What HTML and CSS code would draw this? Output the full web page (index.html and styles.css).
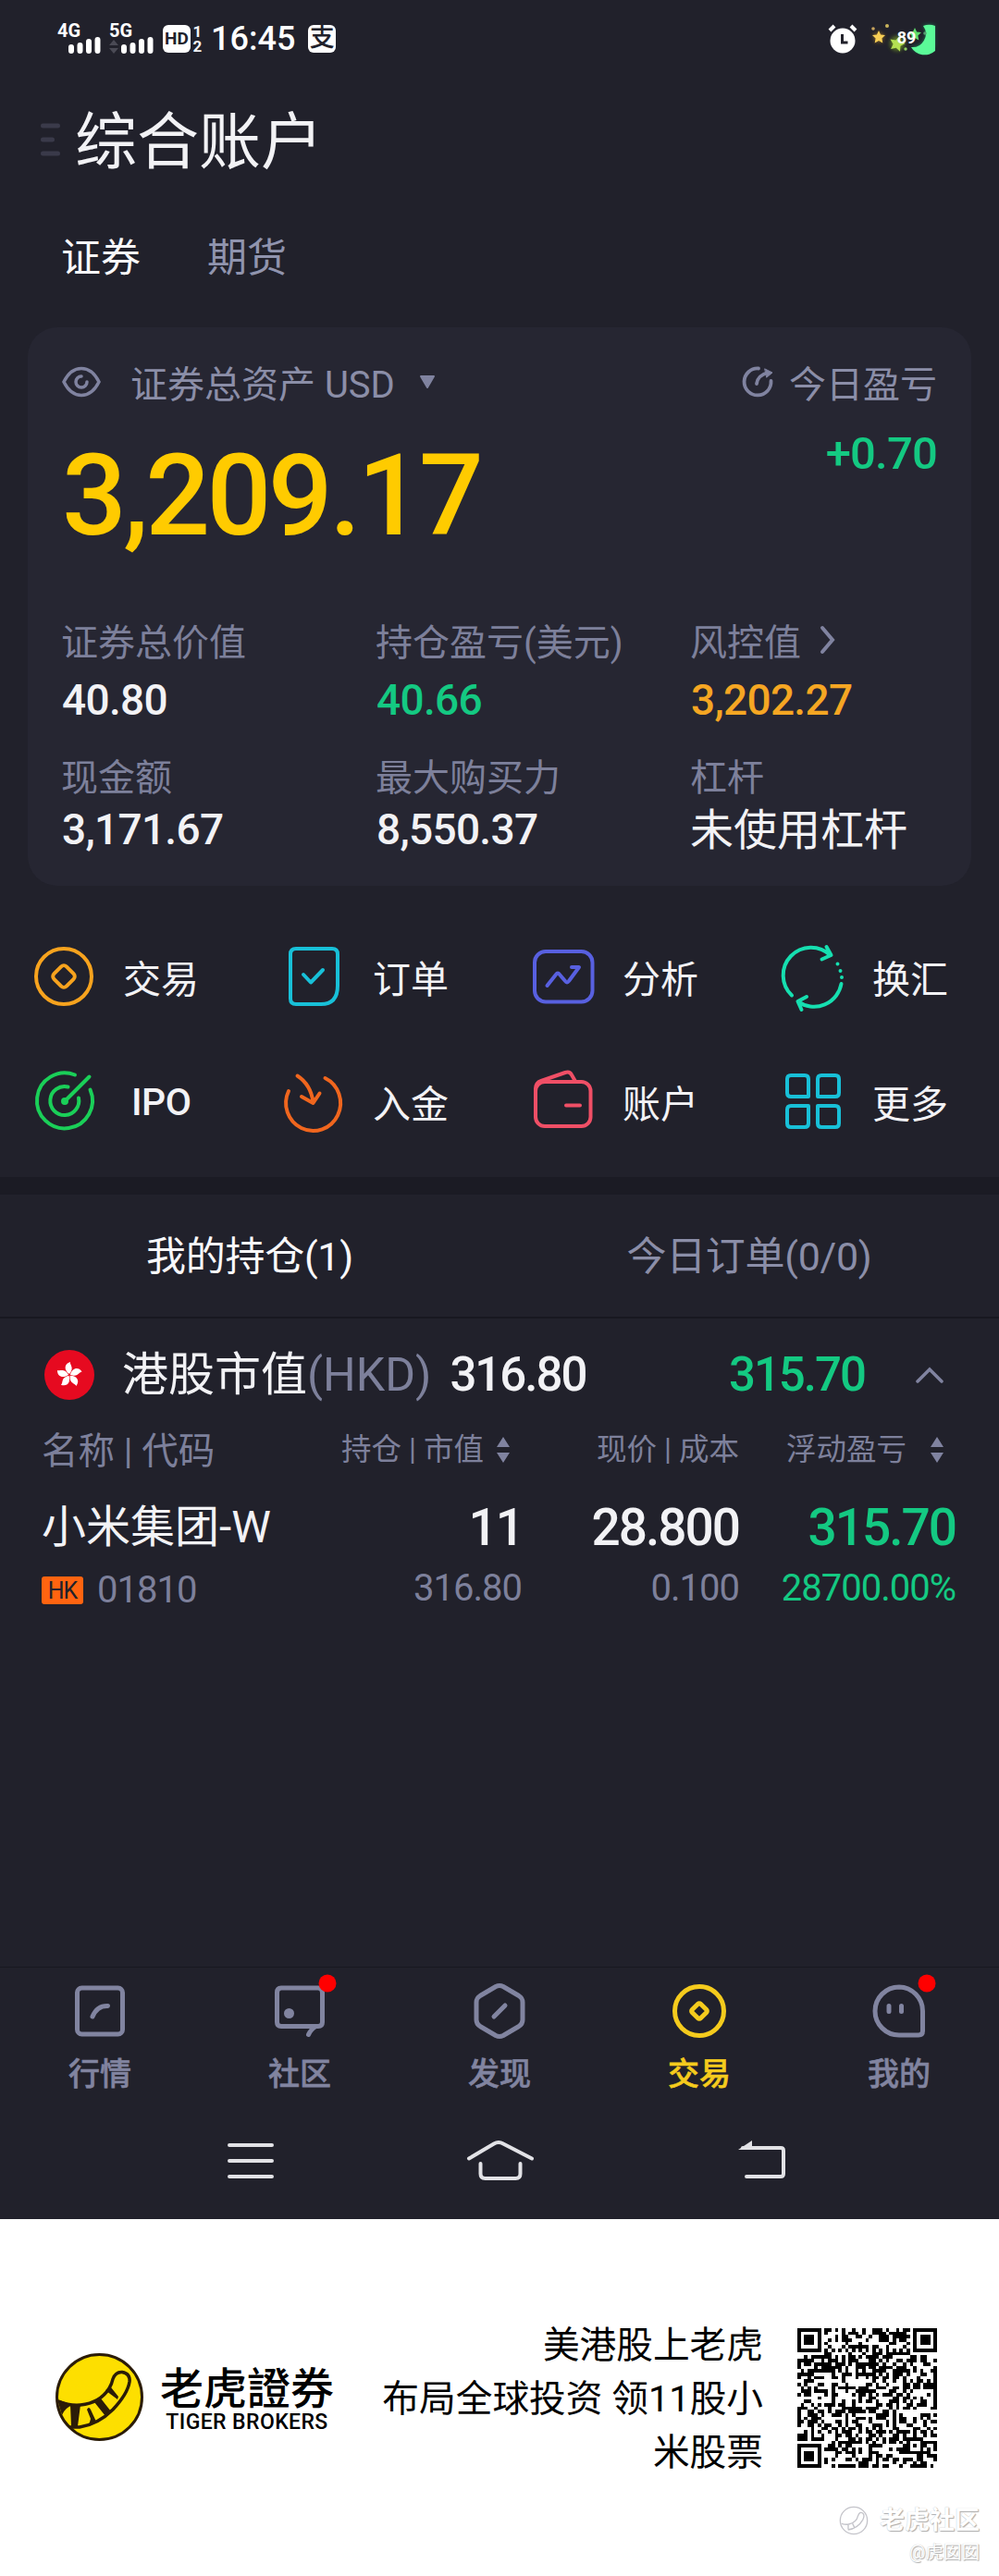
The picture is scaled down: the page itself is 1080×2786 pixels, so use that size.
FILE: index.html
```html
<!DOCTYPE html>
<html lang="zh-CN">
<head>
<meta charset="utf-8">
<title>综合账户</title>
<link rel="stylesheet" href="styles.css">
</head>

<body>
<div class="phone">

<!-- status bar -->
<div class="status">
<svg class="signal" width="48" height="36" viewBox="0 0 48 36">
<text x="0" y="16">4G</text>
<path d="M15 31v-4M24.5 31v-6M34 31v-10M43.500 31v-12" />
</svg>
<svg class="signal second" width="50" height="36" viewBox="0 0 50 36">
<text x="0" y="16">5G</text>
<path class="arrows" d="M0 25l5-6 5 6zM0 28l5 6 5-6z" />
<path d="M16 31v-4M25.500 31v-6M35 31v-10M44.500 31v-12" />
</svg>
<span class="hd">HD</span>
<span class="sims"><i>1</i><i>2</i></span>
<span class="time">16:45</span>
<span class="pay">支</span>
<svg class="alarm" width="32" height="34" viewBox="0 0 32 34">
<circle cx="16" cy="19" r="13.500" fill="#fff" />
<path d="M2 8l5-5M30 8l-5-5" stroke="#fff" stroke-width="4" />
<path d="M15.500 12v9h6" fill="none" stroke="#21212b" stroke-width="3" />
</svg>
<svg class="battery" width="76" height="40" viewBox="0 0 76 40">
<defs>
<path id="star" d="M0-7l2.100 4.500 4.900.6-3.600 3.400.9 4.900L0 4-4.300 6.400l.9-4.900L-7-1.900l4.900-.6z" />
<filter id="glow" x="-50%" y="-50%" width="200%" height="200%"><feGaussianBlur stdDeviation="2" /></filter>
</defs>
<g filter="url(#glow)" opacity=".6">
<use href="#star" x="12" y="18" fill="#e0a020" />
<circle cx="32" cy="25" r="8" fill="#7fae20" />
<path d="M60 5a15 15 0 0 1-13 24a17 17 0 0 0 25 0V5z" fill="#1fc070" />
</g>
<use href="#star" x="12" y="18" fill="#f8cf55" />
<use href="#star" transform="translate(32 25) rotate(15) scale(1.200)" fill="#b4e052" />
<use href="#star" x="51" y="15" fill="#5fdc6c" />
<path d="M60 6a14.500 14.500 0 0 1-13 23a17 17 0 0 0 26 4V6a18 18 0 0 0-13 0z" fill="#5bfa98" />
<circle cx="6" cy="9" r="1.800" fill="#c9a45c" /><circle cx="21" cy="6" r="2" fill="#c9b45c" />
<circle cx="41" cy="31" r="1.700" fill="#8fd060" /><circle cx="62" cy="14" r="1.800" fill="#55a070" />
<text x="42" y="25" text-anchor="middle">89</text>
</svg>
</div>

<div class="title">
<svg width="22" height="36" viewBox="0 0 22 36"><path d="M2.500 3h16M2.500 18h10M2.500 33h16" stroke="#3a3a4a" stroke-width="5" stroke-linecap="round" /></svg>
<h1>综合账户</h1>
</div>

<div class="kinds"><span class="on">证券</span><span>期货</span></div>

<!-- assets -->
<div class="card">
<div class="card-head">
<svg width="42" height="34" viewBox="0 0 42 34" fill="none" stroke="#8083a0" stroke-width="3.500" stroke-linecap="round">
<path d="M2 17C7 7 13 2.500 21 2.500S35 7 40 17C35 27 29 31.500 21 31.500S7 27 2 17z" />
<path d="M21 11a6 6 0 1 0 6 6" />
</svg>
<span class="total">证券总资产 USD</span>
<svg width="18" height="16" viewBox="0 0 18 16"><path d="M2 2h14L9 14z" fill="#8083a0" stroke="#8083a0" stroke-width="2" stroke-linejoin="round" /></svg>
<svg class="refresh" width="36" height="36" viewBox="0 0 36 36" fill="none" stroke="#8083a0" stroke-width="3.800" stroke-linecap="round" stroke-linejoin="round">
<path d="M18 3.500A14.500 14.500 0 1 0 31.500 17M16 20Q17 11 28 8" />
<path d="M25 4l8 4-6 5z" fill="#8083a0" stroke-width="1" />
</svg>
<span>今日盈亏</span>
</div>
<div class="sum"><span class="big">3,209.17</span><span class="today">+0.70</span></div>
<div class="stats">
<div><label>证券总价值</label><b>40.80</b></div>
<div><label>持仓盈亏(美元)</label><b class="green">40.66</b></div>
<div><label>风控值<svg width="18" height="32" viewBox="0 0 18 32"><path d="M3 3l11 13L3 29" fill="none" stroke="#8083a0" stroke-width="4" stroke-linecap="round" /></svg></label><b class="orange">3,202.27</b></div>
<div class="low"><label>现金额</label><b>3,171.67</b></div>
<div class="low"><label>最大购买力</label><b>8,550.37</b></div>
<div class="low"><label>杠杆</label><b class="zh">未使用杠杆</b></div>
</div>
</div>

<!-- shortcuts -->
<div class="actions">
<a><svg viewBox="0 0 70 70" stroke="#f7a31e"><circle cx="35" cy="35" r="30" /><rect x="25.500" y="25.500" width="19" height="19" rx="4" transform="rotate(45 35 35)" /></svg>交易</a>
<a><svg viewBox="0 0 70 70" stroke="#18c0d8"><path d="M16 5h39q6 0 6 6v34q0 20-18 20H16q-6 0-6-6V11q0-6 6-6z" /><path d="M24 33l8 8.500L45 28" /></svg>订单</a>
<a><svg viewBox="0 0 70 70" stroke="#5860e0"><rect x="4" y="8" width="62.500" height="54.500" rx="12" /><path d="M17.500 45L27 33q2-3 4 0l6 7q2 3 4 0l11-15h-8" /></svg>分析</a>
<a><svg viewBox="-1.500 0 70 70" stroke="#16dfb0"><path d="M10.500 55.500A30 30 0 0 1 52 12M48 3l5 9-10 4.500M64 43A30 30 0 0 1 17.500 62.500M26.500 57L17 62l4 9" /><path d="M60 21.500v0M63 29v0M64.500 36v0" /></svg>换汇</a>
<a><svg viewBox="-1 0 70 70" stroke="#1acf58"><path d="M46 6.500A30 30 0 1 0 62.500 22.500M38.500 19.500A15.500 15.500 0 1 0 50 31.500M35 35L61.500 8.500" /><circle cx="35" cy="35" r="2" /></svg><span class="ipo">IPO</span></a>
<a><svg viewBox="0 0 70 70" stroke="#f0661e"><path d="M47.500 10A29.500 30 0 1 1 8 24M17.500 7.500Q32 17 34.500 36M22 30l12.500 7 7-10.500" /></svg>入金</a>
<a><svg viewBox="0 0 70 70" stroke="#f04f66"><rect x="5" y="14" width="59.500" height="48" rx="10" /><path d="M5 22q0-7 6-9L37 4q5-1.500 7 2.500l4 7M38 39.500h15" /></svg>账户</a>
<a><svg viewBox="0 0 70 70" stroke="#18c0d8"><path d="M30 30H11q-4 0-4-4V11q0-4 4-4h15q4 0 4 4zM40 30V11q0-4 4-4h15q4 0 4 4v15q0 4-4 4zM30 40v19q0 4-4 4H11q-4 0-4-4V44q0-4 4-4zM40 40h19q4 0 4 4v15q0 4-4 4H44q-4 0-4-4z" /></svg>更多</a>
</div>

<div class="band"></div>

<!-- positions -->
<div class="lists"><span class="on">我的持仓(1)</span><span>今日订单(0/0)</span></div>

<div class="market">
<svg width="54" height="54" viewBox="-27 -27 54 54">
<defs><path id="petal" d="M0-1C-6-5-6-12 1-14C0-11 6-8 0-1z" /></defs>
<circle r="27" fill="#e60a20" />
<g fill="#fff">
<use href="#petal" /><use href="#petal" transform="rotate(72)" /><use href="#petal" transform="rotate(144)" /><use href="#petal" transform="rotate(216)" /><use href="#petal" transform="rotate(288)" />
</g>
</svg>
<span class="name">港股市值<em>(HKD)</em></span>
<span class="worth">316.80</span>
<span class="gain green">315.70</span>
<svg class="caret" width="32" height="20" viewBox="0 0 32 20"><path d="M3 17L16 4l13 13" fill="none" stroke="#8083a0" stroke-width="3.500" stroke-linecap="round" /></svg>
</div>

<div class="grid heads">
<span class="first">名称 | 代码</span>
<span class="sorted">持仓 | 市值<svg width="16" height="30" viewBox="0 0 16 30"><path d="M1 12l7-11 7 11zM1 18l7 11 7-11z" fill="#8083a0" /></svg></span>
<span>现价 | 成本</span>
<span class="sorted last">浮动盈亏<svg width="16" height="30" viewBox="0 0 16 30"><path d="M1 12l7-11 7 11zM1 18l7 11 7-11z" fill="#8083a0" /></svg></span>
</div>
<div class="grid row">
<span class="first">小米集团-W</span><span class="qty">11</span><span>28.800</span><span class="green">315.70</span>
</div>
<div class="grid sub">
<span class="first"><i class="tag">HK</i>01810</span><span>316.80</span><span>0.100</span><span class="green">28700.00%</span>
</div>

<!-- bottom menu -->
<div class="menu">
<a><svg viewBox="0 0 60 60"><rect x="5.500" y="5" width="49" height="50" rx="5" /><path d="M22 36Q27 24 38.500 24.500" /></svg>行情</a>
<a><svg viewBox="0 0 60 60"><path d="M39.500 55.500q2-5 8-9H10q-4.500 0-4.500-4.500V10q0-5 4.500-5h40q4.500 0 4.500 5v32q0 4.500-4.500 4.500h-3" /><circle class="fill" cx="18.500" cy="32.500" r="5.500" /><circle class="dot" cx="60" cy="0" r="9.500" /></svg>社区</a>
<a><svg viewBox="0 0 60 60"><path d="M26 3.500q4-2 8 0l17 10q4 2.500 4 7v19q0 4.500-4 7l-17 10q-4 2-8 0L9 46.500q-4-2.500-4-7v-19q0-4.500 4-7zM24 36l12-12" /></svg>发现</a>
<a class="on"><svg viewBox="0 0 60 60"><circle cx="30" cy="30" r="26.500" /><rect x="23.500" y="23.500" width="13" height="13" rx="2" transform="rotate(45 30 30)" /></svg>交易</a>
<a><svg viewBox="0 0 60 60"><path d="M30 4A26 26 0 0 0 30 56H51q4.500 0 4.500-4.500V30A26 26 0 0 0 30 4zM19 24.500v6M32.500 24.500v6" /><circle class="dot" cx="60" cy="0" r="9.500" /></svg>我的</a>
</div>

<div class="keys">
<svg viewBox="0 0 80 50"><path d="M17 8h46M17 25h46M17 42h46" /></svg>
<svg viewBox="0 0 80 50"><path d="M6 22.500L33 6.500q5-3 10 0l31 16M18.500 28v11q0 5 5 5h33q5 0 5-5V28" /></svg>
<svg viewBox="0 0 80 50"><path d="M32 11h41q3 0 3 3v25q0 3-3 3H36" /><path class="tip" d="M27 13L42 3v10z" /></svg>
</div>
</div>

<!-- share footer -->
<div class="share">
<svg width="96" height="96" viewBox="0 0 96 96">
<circle cx="47.500" cy="47.500" r="46" fill="#fddf00" stroke="#2b1c08" stroke-width="3" />
<path d="M3 52Q15 57 27 56Q48 54 58 38Q61 33 62 28Q65 20 72 20.500Q81 22 80 31Q78 44 62 61Q46 77 26 80L15 80" fill="none" stroke="#2b1c08" stroke-width="3.500" />
<path d="M2 50l17 6q-9 3-12 11zM16 56h11l-3 23h-7zM34 61q2-4 4 0l6 13-8 4 2-7zM42 53l7-4 11 14-6 5zM54 40l6-3 8 10-1 3-8-6z" fill="#2b1c08" />
</svg>
<div class="brand"><b>老虎證券</b><span>TIGER BROKERS</span></div>
<p>美港股上老虎<br>布局全球投资 领11股小<br>米股票</p>
<svg id="code" width="151" height="151" viewBox="0 0 41 41" shape-rendering="crispEdges"></svg>
<div class="mark">
<div><svg width="32" height="32" viewBox="0 0 96 96"><circle cx="48" cy="48" r="44" /><path d="M8 58q14 4 24 2 24-4 30-28 5-14 15-8 8 7 0 22-16 28-48 32M30 62v14M44 58l6 12" /></svg><b>老虎社区</b></div>
<span>@虎囡囡</span>
</div>
</div>

<script>
/* Draws the 41x41 code: corner eyes, timing lines and the data cells. */
var size = 41;
var seed = 20;
var path = "";

function inBox(x, y, left, top, n) {
	return x >= left && x < left + n && y >= top && y < top + n;
}

/* Distance of a cell from the centre of a square eye. */
function ring(x, y, cx, cy) {
	return Math.max(Math.abs(x - cx), Math.abs(y - cy));
}

function isDark(x, y) {
	seed = (seed * 1103515245 + 12345) % 2147483648;
	var eyes = [[3, 3], [37, 3], [3, 37]];
	for (var i = 0; i < eyes.length; i++) {
		var r = ring(x, y, eyes[i][0], eyes[i][1]);
		if (r <= 4) { return r != 2 && r != 4; }
	}
	if (inBox(x, y, 32, 32, 5)) { return ring(x, y, 34, 34) != 1; }
	if (x == 6 || y == 6) { return (x + y) % 2 == 0; }
	return seed / 2147483648 < 0.5;
}

for (var y = 0; y < size; y++) {
	for (var x = 0; x < size; x++) {
		if (isDark(x, y)) { path += "M" + x + " " + y + "h1v1h-1z"; }
	}
}
document.getElementById("code").innerHTML = '<path d="' + path + '" />';
</script>
</body>
</html>
```

FILE: styles.css
```css
body {
	margin: 0;
	width: 1080px;
	background: #fff;
	font-family: Roboto, "Noto Sans CJK SC", sans-serif;
	color: #f2f2f5;
}

svg {
	flex: none;
	overflow: visible;
}

i, em {
	font-style: normal;
}

.phone {
	display: flex;
	flex-direction: column;
	height: 2400px;
	background: #21212b;
}

.green {
	color: #14c982;
}

/* status bar */
.status {
	display: flex;
	align-items: center;
	height: 84px;
	padding: 0 66px 0 62px;
}

.signal {
	fill: #fff;
	stroke: none;
	font-size: 20px;
	font-weight: bold;
}

.signal path {
	stroke: #fff;
	stroke-width: 6;
	stroke-linecap: round;
}

.signal .arrows {
	fill: #4a4a55;
	stroke: none;
}

.signal.second {
	margin-left: 8px;
}

.hd {
	width: 30px;
	height: 30px;
	margin-left: 8px;
	border-radius: 6px;
	background: #fff;
	color: #21212b;
	font-size: 19px;
	font-weight: bold;
	line-height: 30px;
	text-align: center;
}

.sims {
	display: flex;
	flex-direction: column;
	width: 11px;
	margin-left: 2px;
	font-size: 17px;
	font-weight: bold;
	line-height: 16px;
	text-align: center;
}

.time {
	margin-left: 9px;
	font-size: 36px;
	font-weight: 500;
	color: #fff;
}

.pay {
	width: 30px;
	height: 30px;
	margin-left: 14px;
	border-radius: 6px;
	background: #fff;
	color: #21212b;
	font-size: 27px;
	font-weight: 500;
	line-height: 29px;
	text-align: center;
}

.alarm {
	margin-left: auto;
}

.battery {
	margin-left: 11px;
}

.battery text {
	fill: #fff;
	font-size: 18px;
	font-weight: bold;
}

/* heading */
.title {
	display: flex;
	align-items: center;
	height: 134px;
	padding-left: 44px;
}

h1 {
	margin: 5px 0 0 15px;
	font-size: 67px;
	font-weight: normal;
	line-height: 80px;
}

.kinds {
	display: flex;
	align-items: center;
	gap: 72px;
	box-sizing: border-box;
	height: 118px;
	padding: 0 0 5px 66px;
	color: #9094ae;
	font-size: 43px;
}

.on {
	color: #f8f8fa;
}

/* assets */
.card {
	box-sizing: border-box;
	height: 604px;
	margin: 18px 30px 0;
	padding: 0 37px;
	border-radius: 32px;
	background: #262632;
}

.card-head {
	display: flex;
	align-items: center;
	box-sizing: border-box;
	height: 120px;
	padding-bottom: 3px;
	color: #8b8ea8;
	font-size: 40px;
}

.total {
	margin: 0 26px 0 32px;
}

.refresh {
	margin: 0 15px 0 auto;
}

.sum {
	display: flex;
	justify-content: space-between;
	height: 122px;
}

.big {
	color: #ffcb00;
	font-size: 123px;
	font-weight: 500;
	line-height: 124px;
	letter-spacing: -3.6px;
}

.today {
	color: #14c982;
	font-size: 49px;
	font-weight: 500;
	line-height: 33px;
	letter-spacing: -.8px;
}

.stats {
	display: grid;
	grid-template-columns: 340px 340px 1fr;
	row-gap: 32px;
	padding-top: 73px;
}

.stats label {
	display: flex;
	align-items: center;
	gap: 20px;
	height: 46px;
	margin: 0 0 17px -1px;
	color: #7d809b;
	font-size: 40px;
}

.stats .low label {
	margin-bottom: 11px;
}

.stats b {
	display: block;
	font-size: 46px;
	font-weight: 500;
	line-height: 51px;
	letter-spacing: -.7px;
	white-space: nowrap;
}

.stats .orange {
	color: #f5a623;
}

.stats .zh {
	margin-left: -1px;
	font-size: 47px;
	font-weight: normal;
	letter-spacing: 0;
}

/* shortcuts */
.actions {
	display: grid;
	grid-template-columns: repeat(4, 270px);
	grid-auto-rows: 135px;
	padding: 30px 0 15px;
}

.actions a {
	display: flex;
	align-items: center;
	gap: 29px;
	padding-left: 34px;
	font-size: 41px;
}

.actions svg {
	width: 70px;
	height: 70px;
	fill: none;
	stroke-width: 4;
	stroke-linecap: round;
	stroke-linejoin: round;
}

.ipo {
	margin: 3px 0 0 9px;
	font-size: 41px;
	font-weight: 500;
	letter-spacing: -.5px;
}

.band {
	height: 19px;
	background: #1b1b24;
}

/* positions */
.lists {
	display: grid;
	grid-template-columns: 1fr 1fr;
	height: 132px;
	border-bottom: 2px solid #181820;
	color: #8b8ea8;
	font-size: 43px;
	line-height: 135px;
	letter-spacing: -.3px;
	text-align: center;
}

.market {
	display: flex;
	align-items: center;
	height: 122px;
	padding: 0 59px 0 48px;
	font-size: 51px;
	font-weight: 500;
	line-height: 62px;
	letter-spacing: -2px;
}

.name {
	margin-left: 30px;
	font-size: 50px;
	font-weight: normal;
	letter-spacing: 0;
}

.name em {
	color: #7d809b;
}

.worth {
	margin-left: 20px;
}

.gain {
	margin-left: auto;
}

.caret {
	margin-left: 54px;
}

.grid {
	display: grid;
	grid-template-columns: 255px 264px 235px 234px;
	align-items: center;
	padding-left: 45px;
	text-align: right;
	white-space: nowrap;
}

.grid .first {
	text-align: left;
}

.heads {
	height: 36px;
	color: #7d809b;
	font-size: 32.5px;
	line-height: 36px;
}

.heads .first {
	padding-top: 4px;
	font-size: 39.500px;
	line-height: 36px;
}

.sorted {
	display: flex;
	align-items: center;
	justify-content: flex-end;
	gap: 13px;
	padding-right: 12px;
}

.sorted.last {
	gap: 25px;
}

.row {
	height: 72px;
	margin-top: 32px;
	font-size: 55px;
	font-weight: 500;
	line-height: 72px;
	letter-spacing: -2px;
}

.row .first {
	font-size: 48px;
	font-weight: normal;
	letter-spacing: 0;
}

.row .qty {
	position: relative;
	left: 1px;
}

.sub {
	height: 56px;
	color: #7d809b;
	font-size: 40px;
	line-height: 56px;
	letter-spacing: -1px;
}

.sub .first {
	display: flex;
	align-items: center;
	padding-top: 4px;
}

.tag {
	width: 45px;
	height: 30px;
	margin-right: 15px;
	border-radius: 3px;
	background: #ff6410;
	color: #21212b;
	font-size: 25px;
	line-height: 31px;
	text-align: center;
}

/* bottom menu */
.menu {
	display: grid;
	grid-template-columns: repeat(5, 1fr);
	box-sizing: border-box;
	height: 149px;
	margin-top: auto;
	padding-top: 17px;
	border-top: 1px solid #181820;
}

.menu a {
	display: flex;
	flex-direction: column;
	align-items: center;
	gap: 17px;
	color: #8184a0;
	font-size: 34px;
	font-weight: 500;
	line-height: 42px;
	-webkit-text-stroke: .6px currentColor;
}

.menu .on {
	color: #f5cb1d;
}

.menu svg {
	width: 60px;
	height: 60px;
	fill: none;
	stroke: currentColor;
	stroke-width: 5;
	stroke-linecap: round;
	stroke-linejoin: round;
}

.menu .fill {
	fill: currentColor;
	stroke: none;
}

.menu .dot {
	fill: #f00;
	stroke: none;
}

.keys {
	display: flex;
	align-items: center;
	gap: 190px;
	box-sizing: border-box;
	height: 124px;
	padding: 0 0 2px 231px;
}

.keys svg {
	width: 80px;
	height: 50px;
	fill: none;
	stroke: #e2e2e6;
	stroke-width: 4;
	stroke-linecap: round;
}

.keys .tip {
	fill: #e2e2e6;
	stroke: none;
}

/* share footer */
.share {
	position: relative;
	display: flex;
	align-items: center;
	box-sizing: border-box;
	height: 386px;
	padding: 0 67px 0 60px;
	color: #000;
}

.brand {
	display: flex;
	flex-direction: column;
	width: 190px;
	margin-left: 16px;
	text-align: center;
}

.brand b {
	font-family: "Noto Sans CJK TC", sans-serif;
	font-size: 47px;
	font-weight: 500;
	line-height: 54px;
}

.brand span {
	font-size: 23px;
	font-weight: 500;
	line-height: 26px;
	letter-spacing: .4px;
}

.share p {
	flex: 1;
	margin: 3px 37px 0 0;
	font-size: 39.700px;
	line-height: 58px;
	text-align: right;
	white-space: nowrap;
}

.mark {
	position: absolute;
	right: 21px;
	bottom: 10px;
	color: #fff;
	font-size: 19.500px;
	line-height: 30px;
	text-align: right;
	text-shadow: 1px 1px 1px #aaa, 0 0 1px #bbb;
}

.mark div {
	display: flex;
	align-items: center;
	gap: 12px;
	height: 40px;
}

.mark b {
	font-size: 27px;
}

.mark svg {
	fill: none;
	stroke: #c4c4ca;
	stroke-width: 4;
}
```
